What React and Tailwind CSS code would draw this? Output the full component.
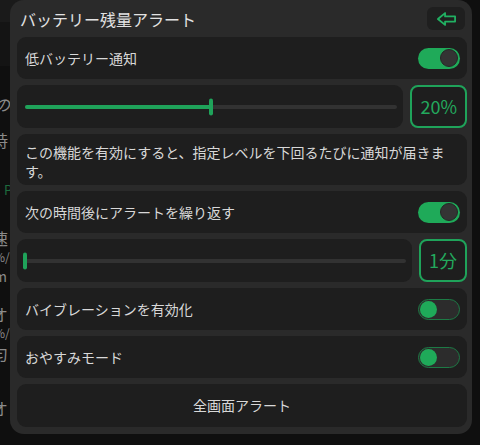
import React from "react";

function ArrowIcon() {
  return (
    <svg width="21" height="16" viewBox="0 0 22 16" fill="none" stroke="#21b062" strokeWidth="1.9" strokeLinecap="round" strokeLinejoin="round">
      <path d="M2 8 L9.5 1.8 V5.3 H20 V10.7 H9.5 V14.2 Z" />
    </svg>
  );
}

function ToggleOn() {
  return (
    <div className="w-[42px] h-[21px] rounded-full bg-[#1faa59] flex items-center justify-end px-[2px]">
      <div className="w-[18px] h-[18px] rounded-full bg-[#343434] border border-[#262626]" />
    </div>
  );
}

function ToggleOff() {
  return (
    <div className="w-[42px] h-[21px] rounded-full bg-[#2c2c2c] border border-[#1d7a45] flex items-center px-[1px]">
      <div className="w-[17px] h-[17px] rounded-full bg-[#1faa59]" />
    </div>
  );
}

function Row({ label, children }) {
  return (
    <div className="h-[42px] rounded-[9px] bg-[#1e1e1e] flex items-center justify-between pl-[8px] pr-[7px]">
      <span className="text-[14px] text-[#d8d8d8]">{label}</span>
      {children}
    </div>
  );
}

function SliderRow({ pct, value }) {
  return (
    <div className="h-[43px] flex gap-[7px]">
      <div className="flex-1 rounded-[9px] bg-[#1e1e1e] flex items-center pl-[8px] pr-[6px]">
        <div className="relative flex-1 h-[4px] rounded-full bg-[#323232]">
          <div className="absolute left-0 top-0 h-full rounded-full bg-[#1fa35a]" style={{ width: pct + "%" }} />
          <div
            className="absolute top-1/2 -translate-y-1/2 w-[4px] h-[17px] rounded-full bg-[#1fa35a]"
            style={{ left: `calc(${pct}% - 2px)` }}
          />
        </div>
      </div>
      <div className="rounded-[8px] border-2 border-[#1fa35a] bg-[#1e1e1e] px-[8px] flex items-center text-[18px] text-[#23a95d]">
        {value}
      </div>
    </div>
  );
}

export default function App() {
  return (
    <div className="relative w-[480px] h-[445px] bg-[#0f0f0f] overflow-hidden font-['Noto_Sans_CJK_JP',sans-serif]">
      {/* underlying page */}
      <div className="flex flex-col w-[40px] text-[16px] text-[#8a8a8a] leading-[20px]">
        <div className="h-[22px] bg-[#1a1a1a]" />
        <div className="h-[44px] bg-[#141414]" />
        <div className="h-[28px]" />
        <div className="ml-[-6px] italic">の</div>
        <div className="ml-[-8px] mt-[16px]">時</div>
        <div className="ml-[-12px] mt-[30px] text-[#1d6b3e] text-[13px]">⊃ P</div>
        <div className="ml-[-8px] mt-[28px] leading-[20px]">速</div>
        <div className="ml-[-6px] text-[12px] leading-[18px]">%/</div>
        <div className="ml-[-6px] text-[14px] leading-[20px]">m</div>
        <div className="ml-[-8px] mt-[18px] leading-[20px]">オ</div>
        <div className="ml-[-6px] text-[12px] leading-[18px]">%/</div>
        <div className="ml-[-8px] leading-[22px]">匀</div>
        <div className="ml-[-8px] mt-[34px]">オ</div>
      </div>

      {/* modal */}
      <div className="absolute left-[10px] top-0 w-[462px] rounded-[14px] bg-[#2a2a2a] pl-[7px] pr-[5px] pb-[7px] flex flex-col gap-[6px]">
        <div className="h-[31px] flex items-center justify-between pt-[6px]">
          <span className="pl-[3px] text-[16px] text-[#e2e2e2]">バッテリー残量アラート</span>
          <button className="w-[38px] h-[23px] mr-[2px] rounded-[6px] bg-[#1f1f1f] flex items-center justify-center">
            <ArrowIcon />
          </button>
        </div>
        <Row label="低バッテリー通知">
          <ToggleOn />
        </Row>
        <SliderRow pct={50} value="20%" />
        <div className="rounded-[9px] bg-[#1e1e1e] pl-[8px] pr-[16px] pt-[9px] pb-[4px] text-[14px] leading-[19px] text-[#d8d8d8]">
          この機能を有効にすると、指定レベルを下回るたびに通知が届きます。
        </div>
        <Row label="次の時間後にアラートを繰り返す">
          <ToggleOn />
        </Row>
        <SliderRow pct={0} value="1分" />
        <Row label="バイブレーションを有効化">
          <ToggleOff />
        </Row>
        <Row label="おやすみモード">
          <ToggleOff />
        </Row>
        <div className="h-[43px] rounded-[9px] bg-[#1e1e1e] flex items-center justify-center text-[14px] text-[#d8d8d8]">
          全画面アラート
        </div>
      </div>
    </div>
  );
}
